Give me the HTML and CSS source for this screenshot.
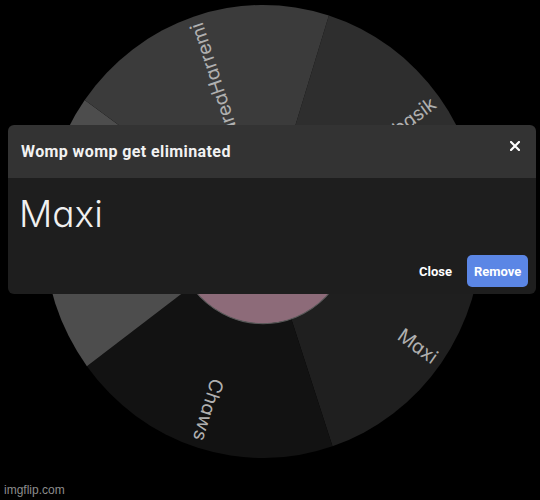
FILE: index.html
```html
<!DOCTYPE html>
<html lang="en">
<head>
<meta charset="utf-8">
<title>Wheel</title>
<link rel="stylesheet" href="styles.css">
</head>
<body>
<div class="stage">
  <svg class="wheel" viewBox="-220 -220 440 440" preserveAspectRatio="none" width="438" height="453">
    <path class="seg seg-basik" d="M0 0 L66.16 -209.8 A220 220 0 0 1 219.99 -1.92 Z"/>
    <path class="seg seg-maxi" d="M0 0 L219.99 -1.92 A220 220 0 0 1 69.81 208.6 Z"/>
    <path class="seg seg-chaws" d="M0 0 L69.81 208.6 A220 220 0 0 1 -176.9 130.9 Z"/>
    <path class="seg seg-left" d="M0 0 L-176.9 130.9 A220 220 0 0 1 -179.1 -127.8 Z"/>
    <path class="seg seg-andrea" d="M0 0 L-179.1 -127.8 A220 220 0 0 1 66.16 -209.8 Z"/>
    <text class="label" transform="rotate(-36.5)" x="213" y="0">Jobasik</text>
    <text class="label" transform="rotate(35.5)" x="213" y="0">Maxi</text>
    <text class="label" transform="rotate(107.5)" x="213" y="0">Chaws</text>
    <text class="label" transform="rotate(179.5)" x="213" y="0">Loreta</text>
    <text class="label" transform="rotate(251.5)" x="213" y="0">AndreaHarremi</text>
    <circle class="hub" cx="0" cy="0" r="89.5"/>
  </svg>
</div>

<div class="modal">
  <div class="modal-header">
    <div class="modal-title">Womp womp get eliminated</div>
    <svg class="close-x" viewBox="0 0 10 10" width="10" height="10">
      <path d="M1 1 L9 9 M9 1 L1 9"/>
    </svg>
  </div>
  <div class="modal-body">
    <div class="winner">Maxi</div>
    <div class="modal-footer">
      <button class="btn btn-plain">Close</button>
      <button class="btn btn-primary">Remove</button>
    </div>
  </div>
</div>

<div class="watermark">imgflip.com</div>
</body>
</html>
```

FILE: styles.css
```css
html, body {
  margin: 0;
  padding: 0;
  background: #000;
}
body {
  width: 540px;
  height: 500px;
  position: relative;
  overflow: hidden;
  font-family: Roboto, "Liberation Sans", sans-serif;
}
.stage {
  padding: 5px 0 0 44px;
}
.wheel {
  display: block;
}
.seg-basik { fill: #2e2e2e; }
.seg-maxi { fill: #1f1f1f; }
.seg-chaws { fill: #121212; }
.seg-left { fill: #4d4d4d; }
.seg-andrea { fill: #3b3b3b; }
.label {
  font-family: Inter, "Noto Sans", sans-serif;
  font-feature-settings: "cv11";
  font-size: 19px;
  font-weight: 400;
  fill: #b0b0b0;
  text-anchor: end;
  dominant-baseline: central;
}
.hub {
  fill: #8d6b79;
  stroke: #5a5a5a;
  stroke-width: 1;
}

.modal {
  position: absolute;
  left: 8px;
  top: 125px;
  width: 528px;
  border-radius: 6px;
  overflow: hidden;
}
.modal-header {
  background: #333333;
  height: 53px;
  box-sizing: border-box;
  padding: 0 16px 0 13px;
  display: flex;
  justify-content: space-between;
  align-items: flex-start;
}
.modal-title {
  margin-top: 17px;
  font-size: 16px;
  line-height: 19px;
  font-weight: 700;
  letter-spacing: 0.4px;
  color: #f2f2f2;
}
.close-x {
  margin-top: 16px;
  display: block;
}
.close-x path {
  stroke: #ffffff;
  stroke-width: 2.2;
  stroke-linecap: square;
  fill: none;
}
.modal-body {
  background: #1e1e1e;
  height: 116px;
  box-sizing: border-box;
  padding: 14px 8px 7px 11px;
  display: flex;
  flex-direction: column;
}
.winner {
  font-family: Inter, "Noto Sans", sans-serif;
  font-feature-settings: "cv11";
  font-size: 37px;
  line-height: 44px;
  font-weight: 300;
  color: #f0f0f0;
}
.modal-footer {
  margin-top: auto;
  display: flex;
  justify-content: flex-end;
  gap: 7px;
}
.btn {
  font-family: Roboto, "Liberation Sans", sans-serif;
  font-size: 13px;
  font-weight: 700;
  height: 32px;
  border: none;
  border-radius: 5px;
  color: #ffffff;
  cursor: pointer;
}
.btn-plain {
  background: transparent;
  padding: 0 8px;
}
.btn-primary {
  background: #5b86e5;
  padding: 0 7px;
  width: 61px;
}
.watermark {
  position: absolute;
  left: 4px;
  top: 483px;
  font-family: "Liberation Sans", Arial, sans-serif;
  font-size: 12px;
  color: #8c8c8c;
}
```
